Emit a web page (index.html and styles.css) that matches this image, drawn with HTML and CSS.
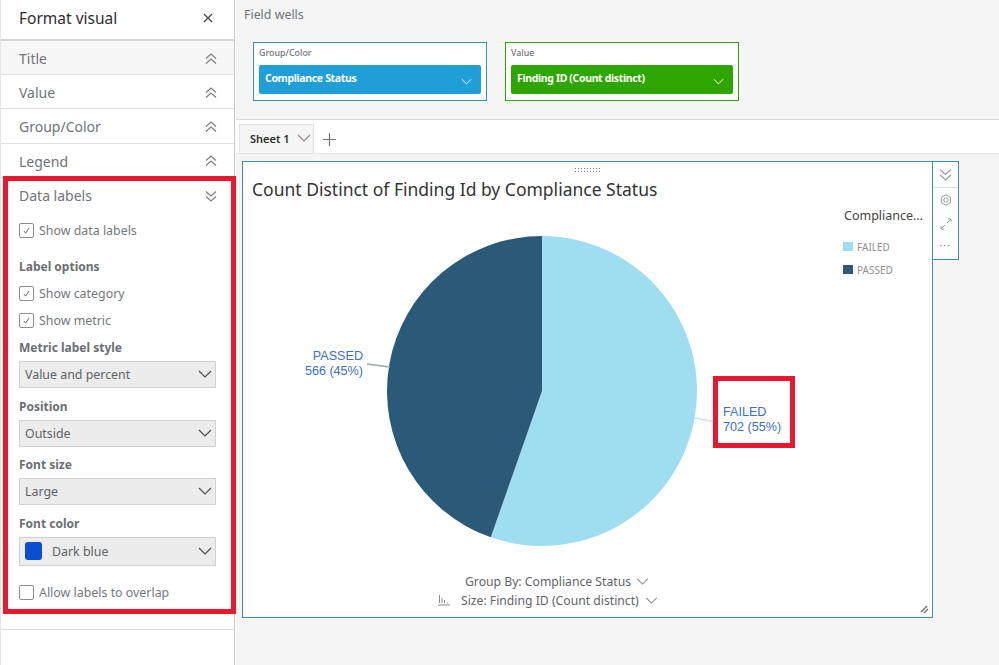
FILE: index.html
```html
<!DOCTYPE html>
<html lang="en">

<head>
    <meta charset="UTF-8">
    <meta name="viewport" content="width=device-width, initial-scale=1.0">
    <title>Format visual</title>
    <link rel="stylesheet" href="styles.css">
</head>

<body>
    <svg class="icon-defs" width="0" height="0">
        <symbol id="double-up" viewBox="0 0 12 12">
            <path d="M1 5.500 6 1l5 4.500M1 10.500 6 6l5 4.500" fill="none" stroke="currentColor" stroke-width="1.200"/>
        </symbol>
        <symbol id="double-down" viewBox="0 0 12 12">
            <path d="M1 1.500 6 6l5-4.500M1 6.500 6 11l5-4.500" fill="none" stroke="currentColor" stroke-width="1.200"/>
        </symbol>
        <symbol id="chevron" viewBox="0 0 14 8">
            <path d="M1 1l6 6 6-6" fill="none" stroke="currentColor" stroke-width="1.200"/>
        </symbol>
    </svg>

    <!-- format panel -->
    <aside class="panel">
        <div class="panel-head">
            <span>Format visual</span>
            <svg class="close-icon" viewBox="0 0 10 10"><path d="M1 1l8 8M9 1l-8 8" stroke="currentColor" stroke-width="1.300"/></svg>
        </div>
        <div class="panel-row panel-row-hover">Title <svg class="double"><use href="#double-up"/></svg></div>
        <div class="panel-row">Value <svg class="double"><use href="#double-up"/></svg></div>
        <div class="panel-row">Group/Color <svg class="double"><use href="#double-up"/></svg></div>
        <div class="panel-row">Legend <svg class="double"><use href="#double-up"/></svg></div>
        <div class="panel-row panel-row-open">Data labels <svg class="double"><use href="#double-down"/></svg></div>

        <div class="section">
            <label class="check"><span class="box is-on"><svg viewBox="0 0 15 15"><path d="M4.500 8l2 2.500 4-6" fill="none" stroke="currentColor"/></svg></span>Show data labels</label>
            <div class="section-title">Label options</div>
            <label class="check check-category"><span class="box is-on"><svg viewBox="0 0 15 15"><path d="M4.500 8l2 2.500 4-6" fill="none" stroke="currentColor"/></svg></span>Show category</label>
            <label class="check check-metric"><span class="box is-on"><svg viewBox="0 0 15 15"><path d="M4.500 8l2 2.500 4-6" fill="none" stroke="currentColor"/></svg></span>Show metric</label>

            <div class="field field-first">
                <div class="field-label">Metric label style</div>
                <div class="select">Value and percent <svg class="select-arrow"><use href="#chevron"/></svg></div>
            </div>
            <div class="field">
                <div class="field-label">Position</div>
                <div class="select">Outside <svg class="select-arrow"><use href="#chevron"/></svg></div>
            </div>
            <div class="field field-size">
                <div class="field-label">Font size</div>
                <div class="select">Large <svg class="select-arrow"><use href="#chevron"/></svg></div>
            </div>
            <div class="field field-color">
                <div class="field-label">Font color</div>
                <div class="select select-color"><span class="swatch"></span>Dark blue <svg class="select-arrow"><use href="#chevron"/></svg></div>
            </div>

            <label class="check check-last"><span class="box"></span>Allow labels to overlap</label>
        </div>
    </aside>

    <main class="content">
        <!-- field wells -->
        <section class="wells">
            <div class="wells-title">Field wells</div>
            <div class="wells-row">
                <div class="well well-blue">
                    <div class="well-label">Group/Color</div>
                    <div class="pill">Compliance Status <svg class="pill-arrow"><use href="#chevron"/></svg></div>
                </div>
                <div class="well well-green">
                    <div class="well-label">Value</div>
                    <div class="pill">Finding ID (Count distinct) <svg class="pill-arrow"><use href="#chevron"/></svg></div>
                </div>
            </div>
        </section>

        <div class="tabs">
            <div class="tab">Sheet 1 <svg class="tab-arrow"><use href="#chevron"/></svg></div>
            <svg class="tab-add" viewBox="0 0 13 13"><path d="M6.500 0v13M0 6.500h13" stroke="currentColor" stroke-width="1.200"/></svg>
        </div>

        <div class="sheet">
            <section class="visual">
                <div class="grip"></div>
                <h2 class="visual-title">Count Distinct of Finding Id by Compliance Status</h2>

                <div class="visual-body">
                    <svg class="pie" viewBox="243 207 590 365">
                        <path d="M542 391V236A155 155 0 1 1 490.800 537.300Z" fill="#9fdef1"/>
                        <path d="M542 391L490.800 537.300A155 155 0 0 1 542 236Z" fill="#2a5a77"/>
                        <path d="M695 418l20 4" stroke="#cfe3ea" stroke-width="1.500" fill="none"/>
                        <path d="M367 364l23 3" stroke="#9aa7ad" stroke-width="1.500" fill="none"/>
                        <g class="pie-label">
                            <text x="363" y="360" text-anchor="end">PASSED</text>
                            <text x="363" y="375" text-anchor="end">566 (45%)</text>
                            <text x="723" y="416">FAILED</text>
                            <text x="723" y="431">702 (55%)</text>
                        </g>
                    </svg>
                    <div class="legend">
                        <div class="legend-title">Compliance…</div>
                        <div class="legend-item"><span class="legend-dot legend-failed"></span>FAILED</div>
                        <div class="legend-item"><span class="legend-dot legend-passed"></span>PASSED</div>
                    </div>
                </div>

                <div class="axis">
                    <div class="axis-line axis-group"><span>Group By: Compliance Status</span><svg class="axis-arrow"><use href="#chevron"/></svg></div>
                    <div class="axis-line axis-size">
                        <svg class="axis-icon" viewBox="0 0 12 12"><path d="M1.500 1v8M4 4v5M6.500 6v3M0 11h12M9 9h1" fill="none" stroke="currentColor"/></svg>
                        <span>Size: Finding ID (Count distinct)</span><svg class="axis-arrow"><use href="#chevron"/></svg>
                    </div>
                </div>

                <svg class="resize" viewBox="0 0 9 9"><path d="M1 7l6-6M4 8l4-4" stroke="currentColor" stroke-width="1.500"/></svg>

                <div class="visual-menu">
                    <svg class="menu-top"><use href="#double-down"/></svg>
                    <svg class="menu-icon" viewBox="0 0 12 12"><path d="M6 .8l4.600 2.600v5.200L6 11.200 1.400 8.600V3.400Z" fill="none" stroke="currentColor"/><circle cx="6" cy="6" r="2.200" fill="none" stroke="currentColor"/></svg>
                    <svg class="menu-icon" viewBox="0 0 12 12"><path d="M7 5l4-4M8 1h3v3M5 7l-4 4M1 8v3h3" fill="none" stroke="currentColor"/></svg>
                    <div class="menu-dots">•••</div>
                </div>
            </section>
        </div>
    </main>

    <!-- red annotations -->
    <div class="callout callout-panel"></div>
    <div class="callout callout-label"></div>
</body>

</html>
```

FILE: styles.css
```css
/* page */
* {
    box-sizing: border-box;
}

body {
    font-family: "Noto Sans", Arial, sans-serif;
    margin: 0;
    width: 999px;
    height: 665px;
    overflow: hidden;
    display: flex;
    background-color: #fff;
    color: #687078;
}

.icon-defs {
    position: absolute;
}

/* format panel */
.panel {
    width: 235px;
    height: 665px;
    margin-right: 1px;
    flex-shrink: 0;
    border-right: 1px solid #c8c8c8;
    border-left: 1px solid #e6e6e6;
    background-color: #fff;
}

.panel-head {
    height: 41px;
    padding: 0 21px 4px 18px;
    display: flex;
    align-items: center;
    justify-content: space-between;
    border-bottom: 2px solid #d5d5d5;
    font-size: 15.500px;
    color: #2d2d2d;
}

.close-icon {
    width: 10px;
    height: 10px;
    color: #444;
}

.panel-row {
    height: 34.200px;
    padding: 2px 17px 0 18px;
    display: flex;
    align-items: center;
    justify-content: space-between;
    border-bottom: 1px solid #e0e0e0;
    font-size: 14px;
    color: #6f7479;
}

.panel-row-hover {
    background-color: #f7f7f7;
}

.panel-row-open {
    border-bottom: none;
}

.double {
    width: 12px;
    height: 12px;
    color: #7d7d7d;
}

.section {
    height: 418px;
    padding: 11px 18px 0;
    border-bottom: 1px solid #dcdcdc;
    font-size: 12.400px;
}

.check {
    height: 16px;
    display: flex;
    align-items: center;
    gap: 5px;
    color: #74787c;
}

.check-category {
    margin-top: 11px;
}

.check-metric {
    margin-top: 11px;
}

.check-last {
    margin-top: 19px;
}

.box {
    width: 15px;
    height: 15px;
    flex-shrink: 0;
    background-color: #fff;
    border: 1px solid #8c8c8c;
    border-radius: 2px;
    color: #555;
}

.box svg {
    display: block;
    width: 13px;
    height: 13px;
}

.section-title,
.field-label {
    height: 16px;
    font-size: 12px;
    font-weight: 700;
    color: #6b6f73;
}

.section-title {
    margin-top: 20px;
    line-height: 16px;
}

.field {
    margin-top: 10px;
}

.field-size {
    margin-top: 9px;
}

.field-label {
    margin-bottom: 6px;
    line-height: 18px;
}

.select {
    width: 197px;
    height: 27px;
    padding: 0 3px 0 5px;
    display: flex;
    align-items: center;
    justify-content: space-between;
    background-color: #ececec;
    border: 1px solid #d2d2d2;
    color: #5f6468;
}

.select-color {
    height: 29px;
    justify-content: flex-start;
}

.swatch {
    width: 17px;
    height: 18px;
    margin-right: 10px;
    border-radius: 3px;
    background-color: #0b4fd1;
}

.select-arrow {
    width: 14px;
    height: 8px;
    color: #4c4c4c;
}

.select-color .select-arrow {
    margin-left: auto;
}

/* field wells */
.content {
    flex: 1;
    min-width: 0;
    display: flex;
    flex-direction: column;
    background-color: #f5f5f5;
}

.wells {
    height: 120px;
    padding: 7px 8px 0;
    border-bottom: 1px solid #d8d8d8;
}

.wells-title {
    height: 16px;
    line-height: 16px;
    font-size: 12.400px;
    color: #6f7479;
}

.wells-row {
    display: flex;
    gap: 18px;
    margin: 19px 0 0 9px;
}

.well {
    width: 234px;
    height: 59px;
    padding: 3px 5px 0;
    background-color: #fff;
    border: 1px solid #3a8fb7;
}

.well-green {
    border-color: #2ea600;
}

.well-label {
    height: 13px;
    line-height: 13px;
    font-size: 8.900px;
    font-weight: 500;
    color: #6f7479;
}

.pill {
    height: 29px;
    margin-top: 6px;
    padding: 0 9px 3px 6px;
    display: flex;
    align-items: center;
    justify-content: space-between;
    border-radius: 2px;
    background-color: #1f9ed8;
    color: #fff;
    font-size: 10.500px;
    font-weight: 700;
    letter-spacing: -0.350px;
}

.well-green .pill {
    background-color: #2ea600;
}

.pill-arrow {
    width: 11px;
    height: 7px;
    margin-top: 6px;
}

/* sheet tabs */
.tabs {
    height: 34px;
    padding-left: 3px;
    display: flex;
    align-items: flex-end;
    background-color: #fff;
    border-bottom: 1px solid #e4e4e4;
}

.tab {
    width: 75px;
    height: 29px;
    padding: 0 2px 2px 10px;
    display: flex;
    align-items: center;
    justify-content: space-between;
    background-color: #f5f5f5;
    border: 1px solid #e4e4e4;
    border-bottom: none;
    font-size: 11px;
    font-weight: 600;
    color: #2d2d2d;
}

.tab-arrow {
    width: 14px;
    height: 8px;
    color: #8a8a8a;
}

.tab-add {
    width: 13px;
    height: 13px;
    margin: 0 0 7px 9px;
    color: #6f7479;
}

/* visual */
.sheet {
    flex: 1;
    padding: 7px 0 0 6px;
}

.visual {
    position: relative;
    width: 691px;
    height: 457px;
    display: flex;
    flex-direction: column;
    background-color: #fff;
    border: 1px solid #3a93ad;
}

.grip {
    position: absolute;
    left: 331px;
    top: 5px;
    width: 28px;
    height: 6px;
    background-image: radial-gradient(#777 0.700px, transparent 0.900px);
    background-size: 3px 3px;
}

.visual-title {
    margin: 17px 0 0 9px;
    height: 20px;
    line-height: 20px;
    font-size: 17.500px;
    font-weight: 400;
    color: #333;
}

.visual-body {
    height: 365px;
    margin-top: 8px;
    display: flex;
}

.pie {
    width: 590px;
    height: 365px;
    flex-shrink: 0;
}

.pie-label {
    font-family: "Liberation Sans", Arial, sans-serif;
    font-size: 12.600px;
    fill: #3d6fc4;
}

.legend {
    margin-left: 11px;
}

.legend-title {
    height: 20px;
    margin-top: -1px;
    line-height: 20px;
    font-size: 12.500px;
    color: #444;
    white-space: nowrap;
}

.legend-item {
    height: 23px;
    display: flex;
    align-items: center;
    gap: 4px;
    font-size: 10px;
    color: #8f8f8f;
}

.legend-title + .legend-item {
    margin-top: 9px;
}

.legend-dot {
    width: 10px;
    height: 9px;
    margin-left: -1px;
}

.legend-failed {
    background-color: #9fdef1;
}

.legend-passed {
    background-color: #2a5a77;
}

.axis {
    height: 36px;
    font-size: 12.200px;
    color: #5f6468;
}

.axis-line {
    height: 18px;
    display: flex;
    align-items: center;
}

.axis-group {
    padding-left: 222px;
}

.axis-size {
    padding-left: 195px;
    margin-top: 1px;
}

.axis-arrow {
    width: 13px;
    height: 7px;
    margin-left: 5px;
    color: #8a8a8a;
}

.axis-size .axis-arrow {
    margin-left: 6px;
}

.axis-icon {
    width: 12px;
    height: 12px;
    margin-right: 11px;
    color: #8a8a8a;
}

.resize {
    position: absolute;
    right: 3px;
    bottom: 3px;
    width: 9px;
    height: 9px;
    color: #777;
}

/* little menu beside the visual */
.visual-menu {
    position: absolute;
    left: 689px;
    top: -1px;
    width: 27px;
    height: 99px;
    display: flex;
    flex-direction: column;
    align-items: center;
    background-color: #fff;
    border: 1px solid #3a93ad;
    color: #9a9a9a;
}

.menu-top {
    width: 25px;
    height: 26px;
    padding: 6px;
    flex-shrink: 0;
    border-bottom: 1px solid #e0e0e0;
}

.menu-icon {
    width: 12px;
    height: 12px;
    margin-top: 6px;
    margin-bottom: 6px;
}

.menu-dots {
    margin-top: 6px;
    font-size: 6px;
    letter-spacing: 1.500px;
    color: #777;
}

/* red annotations */
.callout {
    position: absolute;
    border: 5px solid #e8192c;
}

.callout-panel {
    left: 3px;
    top: 176px;
    width: 233px;
    height: 438px;
}

.callout-label {
    left: 713px;
    top: 376px;
    width: 82px;
    height: 72px;
}
```
